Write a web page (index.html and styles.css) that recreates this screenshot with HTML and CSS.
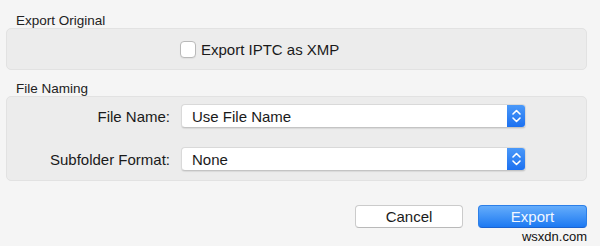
FILE: index.html
```html
<!DOCTYPE html>
<html lang="en">

<head>
  <meta charset="UTF-8">
  <title>Export</title>
  <link rel="stylesheet" href="styles.css">
</head>

<body>
  <div class="dialog">
    <div class="section-title">Export Original</div>
    <div class="group group-check">
      <label class="check">
        <span class="check-box"></span>
        <span>Export IPTC as XMP</span>
      </label>
    </div>

    <div class="section-title spaced">File Naming</div>
    <div class="group group-form">
      <div class="row">
        <div class="row-label">File Name:</div>
        <div class="popup">
          <span class="popup-value">Use File Name</span>
          <span class="stepper">
            <svg width="9" height="14" viewBox="0 0 9 14">
              <path d="M1 5 L4.5 1.5 L8 5 M1 9 L4.5 12.5 L8 9" fill="none" stroke="#fff" stroke-width="1.6" stroke-linecap="round" stroke-linejoin="round" />
            </svg>
          </span>
        </div>
      </div>
      <div class="row">
        <div class="row-label">Subfolder Format:</div>
        <div class="popup">
          <span class="popup-value">None</span>
          <span class="stepper">
            <svg width="9" height="14" viewBox="0 0 9 14">
              <path d="M1 5 L4.5 1.5 L8 5 M1 9 L4.5 12.5 L8 9" fill="none" stroke="#fff" stroke-width="1.6" stroke-linecap="round" stroke-linejoin="round" />
            </svg>
          </span>
        </div>
      </div>
    </div>

    <div class="buttons">
      <button class="btn btn-cancel">Cancel</button>
      <button class="btn btn-primary">Export</button>
    </div>
    <div class="watermark">wsxdn.com</div>
  </div>
</body>

</html>
```

FILE: styles.css
```css
* {
  margin: 0;
  padding: 0;
  box-sizing: border-box;
}

body {
  font-family: 'Liberation Sans', Arial, sans-serif;
  background: #f5f5f5;
  color: #1a1a1a;
  width: 600px;
  height: 246px;
  overflow: hidden;
}

.dialog {
  padding: 13px 13px 0 6px;
}

.section-title {
  font-size: 13.5px;
  line-height: 15px;
  padding-left: 10px;
  color: #222;
}

.section-title.spaced {
  margin-top: 11px;
}

.group {
  background: #ececec;
  border: 1px solid #e2e2e2;
  border-radius: 5px;
}

.group-check {
  height: 42px;
  display: flex;
  align-items: center;
  padding-left: 173px;
}

.check {
  display: flex;
  align-items: center;
  gap: 5px;
  font-size: 15px;
}

.check-box {
  width: 16px;
  height: 17px;
  background: #fff;
  border: 1px solid #b9b9b9;
  border-radius: 4px;
  box-shadow: 0 1px 1px rgba(0, 0, 0, 0.05);
}

.group-form {
  padding: 7px 0 9px;
  display: flex;
  flex-direction: column;
  gap: 19px;
}

.row {
  display: flex;
  align-items: center;
}

.row-label {
  width: 163px;
  text-align: right;
  font-size: 15px;
  margin-right: 11px;
}

.popup {
  width: 345px;
  height: 24px;
  background: #fff;
  border-radius: 4px;
  border: 1px solid #d9d9d9;
  border-bottom-color: #c4c4c4;
  box-shadow: 0 1px 1px rgba(0, 0, 0, 0.08);
  display: flex;
  align-items: center;
  overflow: hidden;
}

.popup-value {
  flex: 1;
  font-size: 15px;
  padding-left: 10px;
}

.stepper {
  width: 19px;
  height: 24px;
  margin: -1px -1px -1px 0;
  background: linear-gradient(#4c9af9, #1a6ff0);
  border-radius: 0 4px 4px 0;
  display: flex;
  align-items: center;
  justify-content: center;
}

.buttons {
  display: flex;
  justify-content: flex-end;
  gap: 15px;
  margin-top: 24px;
}

.btn {
  font-family: inherit;
  font-size: 15px;
  height: 23px;
  border-radius: 4px;
}

.btn-cancel {
  width: 108px;
  background: #fff;
  color: #1a1a1a;
  border: 1px solid #cbcbcb;
  border-bottom-color: #b9b9b9;
}

.btn-primary {
  width: 109px;
  background: linear-gradient(#65adfb, #1d79f2);
  color: #f2f7ff;
  border: 1px solid #2c7fe8;
  border-bottom-color: #1b63d0;
}

.watermark {
  text-align: right;
  font-size: 13px;
  line-height: 14px;
  margin-top: 2px;
  color: #111;
}
```
